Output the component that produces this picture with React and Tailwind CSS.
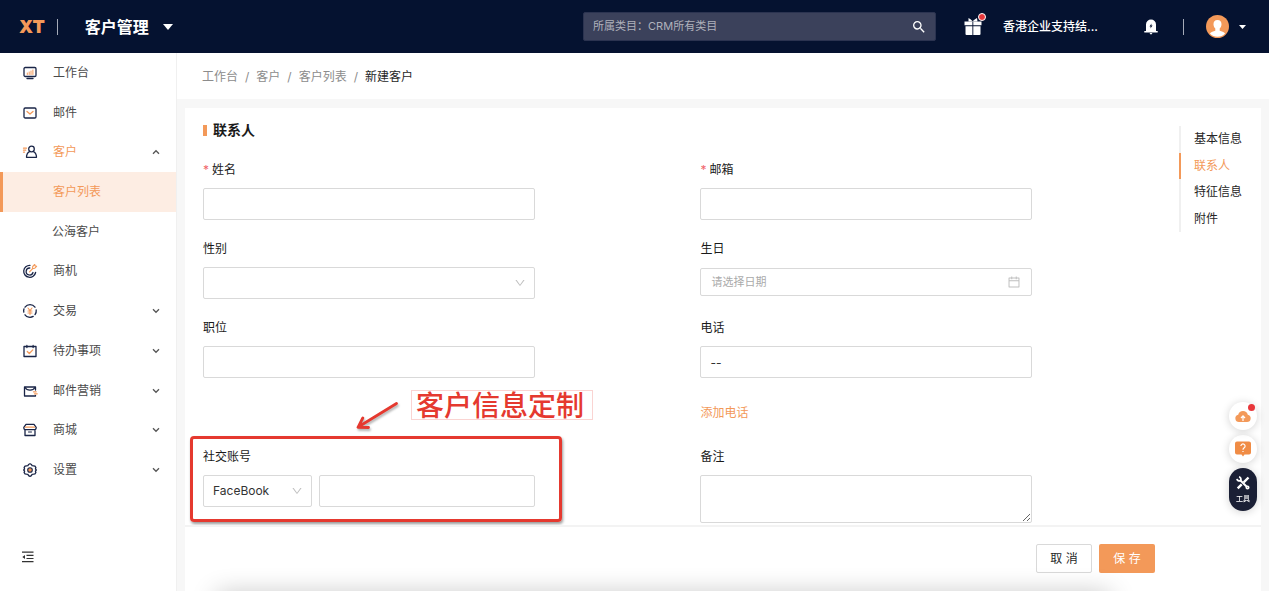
import React, { useState } from 'react';
import { AiOutlineCalendar, AiOutlineDown } from 'react-icons/ai';
import { MdSearch } from 'react-icons/md';

const iconProps = {
  width: 16,
  height: 16,
  viewBox: '0 0 16 16',
  fill: 'none',
  stroke: '#1a2547',
  strokeWidth: 1.3,
  strokeLinecap: 'round',
  strokeLinejoin: 'round',
  'aria-hidden': true,
};

const icons = {
  workbench: (
    <svg {...iconProps}>
      <rect x="2" y="2.5" width="12" height="9" rx="1.2" />
      <path d="M5 13.5h6" />
      <path d="M5.3 9.5V8M7.2 9.5V7M9 9.5V6M10.9 9.5V5" stroke="#f39959" strokeWidth="1" />
    </svg>
  ),
  mail: (
    <svg {...iconProps}>
      <rect x="2" y="3" width="12" height="10" rx="1.2" />
      <path d="M5 6.5l3 2.5 3-2.5" stroke="#f39959" />
    </svg>
  ),
  customer: (
    <svg {...iconProps}>
      <circle cx="9.5" cy="5" r="2.8" />
      <path d="M7.5 7.6C5.6 8.6 4.5 10.500 4.500 13.300h10c0-2.800-1.100-4.700-3-5.700" />
      <path d="M1.500 4.200h3M1.500 6.200h2.200M1.500 8.200h1" stroke="#f39959" />
    </svg>
  ),
  target: (
    <svg {...iconProps}>
      <path d="M8 2.3a6 6 0 1 0 5.600 7.200" />
      <path d="M7.8 5a3.500 3.500 0 1 0 3.200 4.500" />
      <path d="M7.5 8.8l3.300-3.300M10.5 5.7l.2-2.200 2-2 .4 1.400 1.500.4-2 2z" stroke="#f39959" strokeWidth="1.1" />
    </svg>
  ),
  trade: (
    <svg {...iconProps}>
      <path d="M3 4.200a6.200 6.200 0 0 1 10 0M14.200 7a6.200 6.200 0 0 1-1.200 4.600M11.200 13.400a6.200 6.200 0 0 1-8.200-1.600M1.800 9.200a6.200 6.200 0 0 1 .2-3.400" />
      <path d="M6 5l2 2.600L10 5M6 8h4M6 10h4M8 7.600v4" stroke="#f39959" strokeWidth="1.1" />
    </svg>
  ),
  todo: (
    <svg {...iconProps}>
      <path d="M2 3.5h1.800M6 3.500h4M12.200 3.500H14v10H2v-10M4.900 2.300v2.200M11.100 2.300v2.200" />
      <path d="M5.3 8.500l2 2 3.500-3.600" stroke="#f39959" />
    </svg>
  ),
  marketing: (
    <svg {...iconProps}>
      <path d="M13.500 7V4H2.500v9h11v-.5" />
      <path d="M3 4.500C5 8 11 8 13 4.500" />
      <path d="M11.500 8.800h2.700M12.500 10.800h2.700" stroke="#f39959" />
    </svg>
  ),
  mall: (
    <svg {...iconProps}>
      <path d="M4 2.300h8l2.200 3c0 1.500-.6 2.400-1.400 2.400H3.200c-.8 0-1.400-.9-1.400-2.400zM3 8v5.500h10V8" />
      <path d="M3.500 5.200h9" stroke="#f39959" />
      <path d="M6.500 10h3" strokeWidth="1" />
    </svg>
  ),
  settings: (
    <svg {...iconProps}>
      <path d="M6.500 2.500L8 1.700l1.500.8.6 1.200 1.400.1 1.500.3.900 1.500-.5 1.300L14.300 8l-.9 1.200.5 1.300-.9 1.400-1.500.3-1.400.1-.6 1.300-1.500.7-1.500-.7-.6-1.300-1.400-.1-1.500-.3-.9-1.400.5-1.300L1.700 8l.9-1.100-.5-1.300L3 4.100l1.500-.3 1.400-.1z" />
      <circle cx="8" cy="8" r="2.300" fill="#f39959" strokeWidth="1.1" />
    </svg>
  ),
};

const menu = [
  { label: '工作台', icon: 'workbench' },
  { label: '邮件', icon: 'mail' },
  { label: '客户', icon: 'customer', arrow: 'up', active: true },
  { label: '客户列表', sub: true, selected: true },
  { label: '公海客户', sub: true },
  { label: '商机', icon: 'target' },
  { label: '交易', icon: 'trade', arrow: 'down' },
  { label: '待办事项', icon: 'todo', arrow: 'down' },
  { label: '邮件营销', icon: 'marketing', arrow: 'down' },
  { label: '商城', icon: 'mall', arrow: 'down' },
  { label: '设置', icon: 'settings', arrow: 'down' },
];

const anchors = ['基本信息', '联系人', '特征信息', '附件'];

const inputClass = 'block h-8 w-full rounded-xs border border-[#d9d9d9] bg-white px-[9px] text-xs text-[#333] outline-none';

const Arrow = ({ up }) => (
  <svg width="8" height="6" viewBox="0 0 8 6" fill="none" stroke="#555" strokeWidth="1.3" aria-hidden="true">
    <path d={up ? 'M1 4.700l3-3 3 3' : 'M1 1.300l3 3 3-3'} />
  </svg>
);

const Header = () => (
  <header className="flex h-[53px] shrink-0 items-center bg-[#051230] text-white">
    <a href="#home" className="ml-[19px] text-lg font-black text-[#f39959]">XT</a>
    <span className="ml-3 h-4 w-px bg-[#a5aab8]" />
    <button className="ml-[27px] flex items-center gap-3.5 text-base font-bold">
      客户管理
      <svg width="10" height="6" viewBox="0 0 10 6" fill="#fff" aria-hidden="true"><path d="M0 0h10L5 6z" /></svg>
    </button>
    <div className="ml-auto flex h-[29px] w-[353px] items-center rounded-xs border border-[#2b3350] bg-[#3b415b] pr-2 pl-[9px]">
      <input aria-label="搜索" placeholder="所属类目：CRM所有类目" className="min-w-0 flex-1 text-[11px] outline-none placeholder:text-[#b0b2bc]" />
      <button aria-label="搜索"><MdSearch size={16} /></button>
    </div>
    <button aria-label="礼物" className="relative ml-[28px]">
      <svg width="18" height="19" viewBox="0 0 18 19" fill="#fff" aria-hidden="true">
        <path d="M.5 4.500h7.900v3.800H.5zM9.300 4.500h8.200v3.800H9.300zM1.500 9.200h6.900V18H2.500a1 1 0 0 1-1-1zM9.300 9.200h7.200V17a1 1 0 0 1-1 1H9.300z" />
        <path d="M4.500 1l2 1.200L8.600 4.300 11 2.200 13 1l.5 3.500h-9z" />
      </svg>
      <span className="absolute -top-1 -right-1 size-2 rounded-full border border-white bg-[#e8373b]" />
    </button>
    <span className="ml-[21px] text-xs font-medium">香港企业支持结...</span>
    <button aria-label="通知" className="ml-[46px]">
      <svg width="14" height="16" viewBox="0 0 14 16" fill="#fff" fillRule="evenodd" aria-hidden="true">
        <path d="M2 12V5.500a5 5 0 0 1 10 0V12h1.700v1.500H.3V12zM7.500 4.500L5.500 7.500h1.200L6.400 9.500l2.200-2.900H7.300zM5.500 14h3L7 15.800z" />
      </svg>
    </button>
    <span className="ml-[25px] h-4 w-px bg-[#a5aab8]" />
    <button aria-label="账户" className="mr-[23px] ml-[22px] flex items-center gap-2.5">
      <svg width="23" height="23" viewBox="0 0 23 23" aria-hidden="true">
        <circle cx="11.5" cy="11.5" r="11.5" fill="#f39959" />
        <path d="M11.5 5c3 0 4.100 2 4 4.500-.1 1.800-.9 3.200-1.800 4.100v2.200c2 .7 4.200 1.200 5.400 2.700a10.500 10.500 0 0 1-15.200 0c1.200-1.500 3.400-2 5.400-2.700v-2.200c-.9-.9-1.700-2.300-1.800-4.100-.1-2.500 1-4.500 4-4.500z" fill="#fff" />
      </svg>
      <svg width="7" height="4" viewBox="0 0 7 4" fill="#fff" aria-hidden="true"><path d="M0 0h7L3.500 4z" /></svg>
    </button>
  </header>
);

const Sidebar = () => (
  <aside className="flex w-[177px] shrink-0 flex-col border-r border-[#f0f0f0] bg-white">
    <nav className="grid h-[437px] auto-rows-fr">
      {menu.map((item) => (
        <a
          key={item.label}
          href={`#${item.label}`}
          className={`flex items-center pr-4 text-xs ${item.selected ? 'border-l-3 border-[#f39959] bg-[#fdede3] pl-[50px]' : item.sub ? 'pl-[52px]' : 'pl-[22px]'} ${item.active || item.selected ? 'text-[#f39959]' : 'text-[#4a4a4a]'}`}
        >
          {item.icon && <span className="mr-[15px]">{icons[item.icon]}</span>}
          <span className="flex-1">{item.label}</span>
          {item.arrow && <Arrow up={item.arrow === 'up'} />}
        </a>
      ))}
    </nav>
    <button aria-label="收起菜单" className="mt-auto mb-7 ml-[22px] w-3">
      <svg width="12" height="12" viewBox="0 0 12 12" stroke="#333" strokeWidth="1.2" aria-hidden="true">
        <path d="M0 1.200h11.500M4.500 4.400h7M4.500 7.500h7M0 10.700h11.500" />
        <path d="M3 4v4L.3 6z" fill="#333" stroke="none" />
      </svg>
    </button>
  </aside>
);

const Label = ({ htmlFor, required, children }) => (
  <label htmlFor={htmlFor} className="flex h-[22px] items-center gap-[3px] text-xs text-[#1a1a1a]">
    {required && <span className="text-[#f0656a]">*</span>}
    {children}
  </label>
);

const Select = ({ className, children, ...props }) => (
  <div className={`relative ${className}`}>
    <select {...props} className={`${inputClass} appearance-none pr-7`}>{children}</select>
    <AiOutlineDown size={12} className="pointer-events-none absolute top-2.5 right-[9px] text-[#bfbfbf]" />
  </div>
);

// red marker drawn over the social account field
const Annotation = () => (
  <div className="pointer-events-none">
    <div className="absolute -top-2.5 -right-[27px] -bottom-[15px] -left-[13px] rounded-sm border-[3px] border-[#e5392f] shadow-[1px_2px_3px_rgba(0,0,0,0.4)]" />
    <svg className="absolute -top-12 left-[150px] drop-shadow-[1px_2px_1px_rgba(0,0,0,0.3)]" width="48" height="36" viewBox="0 0 48 36" fill="none" stroke="#e5392f" strokeWidth="2.8" strokeLinecap="round" strokeLinejoin="round" aria-hidden="true">
      <path d="M43.5 5.500L6 28.500M9.800 20L5 29.300l10.500.2" />
    </svg>
    <p className="absolute -top-14 left-[208px] h-[30px] border border-[#fad4d2] pr-2 pl-1 text-[28px] leading-[30px] font-medium whitespace-nowrap text-[#e5392f]">客户信息定制</p>
  </div>
);

const ContactForm = () => {
  const [phone, setPhone] = useState('--');

  return (
    <form id="contact" className="min-w-0 flex-1 pt-3">
      <h2 className="flex h-5 items-center gap-1.5 text-sm font-bold text-[#1a1a1a]">
        <span className="h-[11px] w-1 bg-[#f39959]" />
        联系人
      </h2>
      <div className="mt-[19px] grid grid-cols-2 gap-x-[20%] gap-y-[18px]">
        <div>
          <Label htmlFor="name" required>姓名</Label>
          <input id="name" className={`${inputClass} mt-[7px]`} />
        </div>
        <div>
          <Label htmlFor="email" required>邮箱</Label>
          <input id="email" type="email" className={`${inputClass} mt-[7px]`} />
        </div>
        <div>
          <Label htmlFor="gender">性别</Label>
          <Select id="gender" className="mt-[7px]"><option></option></Select>
        </div>
        <div>
          <Label htmlFor="birthday">生日</Label>
          <div className="mt-2 flex h-7 items-center rounded-xs border border-[#d9d9d9] px-2.5">
            <input id="birthday" placeholder="请选择日期" className="min-w-0 flex-1 text-[11px] outline-none placeholder:text-[#aaa]" />
            <AiOutlineCalendar size={14} className="text-[#bfbfbf]" />
          </div>
        </div>
        <div>
          <Label htmlFor="job">职位</Label>
          <input id="job" className={`${inputClass} mt-[7px]`} />
        </div>
        <div>
          <Label htmlFor="phone">电话</Label>
          <input id="phone" value={phone} onChange={(e) => setPhone(e.target.value)} className={`${inputClass} mt-[7px]`} />
          <button type="button" className="mt-6 mb-1 block h-[22px] text-xs text-[#f39959]">添加电话</button>
        </div>
        <div className="relative self-start">
          <Label htmlFor="social">社交账号</Label>
          <div className="mt-[7px] flex gap-[7px]">
            <Select id="platform" aria-label="社交平台" className="w-[33%] shrink-0"><option>FaceBook</option></Select>
            <input id="social" className={`${inputClass} min-w-0`} />
          </div>
          <Annotation />
        </div>
        <div>
          <Label htmlFor="remark">备注</Label>
          <textarea id="remark" className="mt-[7px] block h-12 w-full resize-y rounded-xs border border-[#d9d9d9] px-2.5 py-1 text-xs outline-none" />
        </div>
      </div>
    </form>
  );
};

const FloatingTools = () => (
  <div className="fixed right-3 bottom-20 flex w-7 flex-col gap-[5px]">
    <button aria-label="上传" className="relative flex size-7 items-center justify-center rounded-full bg-white shadow-[0_1px_8px_rgba(0,0,0,0.18)]">
      <svg width="16" height="12" viewBox="0 0 16 12" aria-hidden="true">
        <path d="M4 12a3.700 3.700 0 0 1-.8-7.300 5 5 0 0 1 9.600 0A3.700 3.700 0 0 1 12 12z" fill="#f39959" />
        <path d="M8 11V6M6 8l2-2.200L10 8" fill="none" stroke="#fff" strokeWidth="1.2" />
      </svg>
      <span className="absolute top-0.5 right-0.5 size-[7px] rounded-full bg-[#e8373b]" />
    </button>
    <button aria-label="帮助" className="flex size-7 items-center justify-center rounded-full bg-white shadow-[0_1px_8px_rgba(0,0,0,0.18)]">
      <svg width="16" height="16" viewBox="0 0 16 16" aria-hidden="true">
        <path d="M2 .5h12a2 2 0 0 1 2 2V11.500a2 2 0 0 1-2 2h-4.500L8 15.500 6.500 13.500H2a2 2 0 0 1-2-2V2.500a2 2 0 0 1 2-2z" fill="#f08c45" />
        <path d="M5.900 5a2.100 2.100 0 1 1 3.300 1.800C8.300 7.400 8 7.800 8 8.700M8 9.900v1.200" fill="none" stroke="#fff" strokeWidth="1.2" />
      </svg>
    </button>
    <button className="flex h-[43px] flex-col items-center justify-center gap-1 rounded-full bg-[#1a1f35] text-[7px] leading-[10px] font-medium text-white shadow-[0_1px_8px_rgba(0,0,0,0.18)]">
      <svg width="14" height="14" viewBox="0 0 14 14" fill="none" stroke="#fff" aria-hidden="true">
        <path d="M4.5 4.500l7 7" strokeWidth="2" />
        <circle cx="11.5" cy="11.5" r="1.3" strokeWidth="1.5" />
        <path d="M1 2.800a2.300 2.300 0 0 0 3.400 1.800A2.300 2.300 0 0 0 3 .9" strokeWidth="1.8" />
        <path d="M12.5 1.500L7.700 6.300M5.700 8.300l-4 4" strokeWidth="2.4" />
      </svg>
      工具
    </button>
  </div>
);

const App = () => {
  const [current, setCurrent] = useState('联系人');

  return (
    <div className="flex h-screen flex-col overflow-hidden bg-[#f7f7f7] font-['Inter','Noto_Sans_CJK_SC',sans-serif]">
      <Header />
      <div className="flex min-h-0 flex-1">
        <Sidebar />
        <main className="flex min-w-0 flex-1 flex-col">
          <nav className="flex h-[46px] shrink-0 items-center gap-[7px] bg-white pt-0.5 pl-[25px] text-xs text-[#8c8c8c]">
            <a href="#workbench">工作台</a>
            <span>/</span>
            <a href="#customer">客户</a>
            <span>/</span>
            <a href="#list">客户列表</a>
            <span>/</span>
            <span className="text-[#262626]">新建客户</span>
          </nav>
          <div className="mx-2 mt-[9px] flex min-h-0 flex-1 flex-col bg-white">
            <div className="flex min-h-0 flex-1 overflow-hidden pl-[18px]">
              <ContactForm />
              <ul className="mt-[18px] ml-[147px] grid h-[106px] w-[82px] shrink-0 auto-rows-fr text-xs text-[#262626]">
                {anchors.map((name) => (
                  <li key={name} className="grid">
                    <a
                      href="#contact"
                      onClick={() => setCurrent(name)}
                      className={`flex items-center border-l-2 pl-[13px] ${current === name ? 'border-[#f39959] text-[#f39959]' : 'border-[#f0f0f0]'}`}
                    >
                      {name}
                    </a>
                  </li>
                ))}
              </ul>
            </div>
            <footer className="relative flex h-[66px] shrink-0 items-start justify-end gap-[7px] overflow-hidden border-t-2 border-[#f3f3f3] pt-[17px] pr-[106px]">
              <button className="h-[29px] w-14 rounded-xs border border-[#d9d9d9] bg-white text-xs text-[#262626]">取 消</button>
              <button className="h-[29px] w-14 rounded-xs bg-[#f39959] text-xs text-white">保 存</button>
              <div className="pointer-events-none absolute top-full right-[14%] left-[3%] h-4 shadow-[0_4px_26px_rgba(0,0,0,0.3)]" />
            </footer>
          </div>
        </main>
      </div>
      <FloatingTools />
    </div>
  );
};

export default App;
